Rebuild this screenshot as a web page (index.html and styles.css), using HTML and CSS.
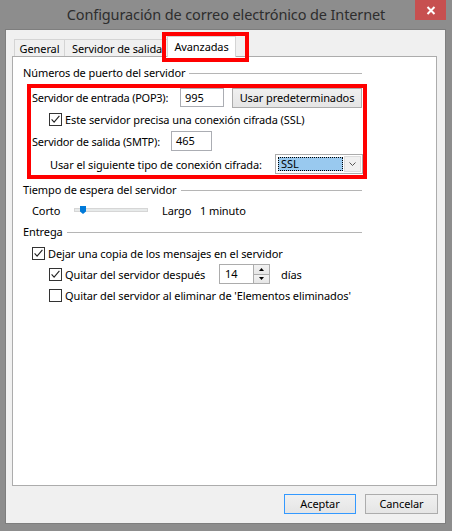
FILE: index.html
```html
<!DOCTYPE html>
<html lang="es">
<head>
<meta charset="utf-8">
<title>Configuración de correo electrónico de Internet</title>
<link rel="stylesheet" href="styles.css">
</head>
<body>
<div class="window">
  <div class="titlebar">
    <div class="title">Configuración de correo electrónico de Internet</div>
    <div class="close">
      <svg width="10" height="9" viewBox="0 0 10 9"><path d="M1.5 1 L8.5 8 M8.5 1 L1.5 8" stroke="#fff" stroke-width="2" fill="none"/></svg>
    </div>
  </div>
  <div class="client">
    <div class="tabs">
      <div class="tab tab-general">General</div>
      <div class="tab tab-out">Servidor de salida</div>
      <div class="tab tab-sel">Avanzadas</div>
      <div class="tab-mark"></div>
    </div>
    <div class="panel">
      <div class="ghead"><span>Números de puerto del servidor</span><i class="rule"></i></div>
      <div class="markbox">
        <div class="row r1">
          <span class="lbl lbl-in">Servidor de entrada (POP3):</span>
          <span class="textbox tb-in">995</span>
          <span class="btn btn-defaults">Usar predeterminados</span>
        </div>
        <div class="row r2">
          <svg class="cb" width="13" height="13" viewBox="0 0 13 13"><rect x="0.5" y="0.5" width="12" height="12" fill="#fff" stroke="#333"/><path d="M2.6 6.4 L5.1 9.2 L10.4 2.8" stroke="#222" stroke-width="1.1" fill="none"/></svg>
          <span class="cbtext">Este servidor precisa una conexión cifrada (SSL)</span>
        </div>
        <div class="row r3">
          <span class="lbl lbl-out">Servidor de salida (SMTP):</span>
          <span class="textbox tb-out">465</span>
        </div>
        <div class="row r4">
          <span class="lbl lbl-enc">Usar el siguiente tipo de conexión cifrada:</span>
          <span class="select">
            <span class="sel-value">SSL</span>
            <span class="sel-drop"><svg width="7" height="4" viewBox="0 0 7 4"><path d="M0.5 0.5 L3.5 3.5 L6.5 0.5" stroke="#555" fill="none"/></svg></span>
          </span>
        </div>
      </div>

      <div class="ghead g2"><span>Tiempo de espera del servidor</span><i class="rule"></i></div>
      <div class="row slider-row">
        <span class="s-short">Corto</span>
        <span class="track"><svg class="thumb" width="6" height="8" viewBox="0 0 6 8"><path d="M0 0 H6 V5.5 L3 8 L0 5.5 Z" fill="#007ad9"/></svg></span>
        <span class="s-long">Largo</span>
        <span>1 minuto</span>
      </div>

      <div class="ghead g3"><span>Entrega</span><i class="rule"></i></div>
      <div class="row e1">
        <svg class="cb" width="13" height="13" viewBox="0 0 13 13"><rect x="0.5" y="0.5" width="12" height="12" fill="#fff" stroke="#333"/><path d="M2.6 6.4 L5.1 9.2 L10.4 2.8" stroke="#222" stroke-width="1.1" fill="none"/></svg>
        <span class="cbtext">Dejar una copia de los mensajes en el servidor</span>
      </div>
      <div class="row e2">
        <svg class="cb" width="13" height="13" viewBox="0 0 13 13"><rect x="0.5" y="0.5" width="12" height="12" fill="#fff" stroke="#333"/><path d="M2.6 6.4 L5.1 9.2 L10.4 2.8" stroke="#222" stroke-width="1.1" fill="none"/></svg>
        <span class="cbtext days-label">Quitar del servidor después</span>
        <span class="spinner">
          <span class="spin-value">14</span>
          <span class="spin-btns">
            <span class="spin-btn"><svg width="5" height="3" viewBox="0 0 5 3"><path d="M0 3 L2.5 0 L5 3 Z" fill="#000"/></svg></span>
            <span class="spin-btn"><svg width="5" height="3" viewBox="0 0 5 3"><path d="M0 0 L2.5 3 L5 0 Z" fill="#000"/></svg></span>
          </span>
        </span>
        <span class="days">días</span>
      </div>
      <div class="row e3">
        <svg class="cb" width="13" height="13" viewBox="0 0 13 13"><rect x="0.5" y="0.5" width="12" height="12" fill="#fff" stroke="#333"/></svg>
        <span class="cbtext">Quitar del servidor al eliminar de 'Elementos eliminados'</span>
      </div>
    </div>
    <div class="actions">
      <span class="btn btn-default">Aceptar</span>
      <span class="btn btn-cancel">Cancelar</span>
    </div>
  </div>
</div>
</body>
</html>
```

FILE: styles.css
```css
* { box-sizing: border-box; }
html, body { margin: 0; padding: 0; }
body {
  width: 452px;
  height: 531px;
  overflow: hidden;
  background: #8d8d8d;
  font-family: "Noto Sans", "Open Sans", sans-serif;
  font-size: 11px;
  letter-spacing: -0.1px;
  color: #000;
}
.window { display: flex; flex-direction: column; height: 531px; }

.titlebar {
  display: grid;
  grid-template-columns: 1fr auto 1fr;
  height: 30px;
}
.title {
  grid-column: 2;
  font-size: 14.5px;
  letter-spacing: -0.12px;
  line-height: 28px;
  color: #2e2e2e;
  white-space: nowrap;
}
.close {
  grid-column: 3;
  justify-self: end;
  margin-right: 6px;
  width: 31px;
  height: 20px;
  background: #c75050;
  display: flex;
  align-items: center;
  justify-content: center;
}

.client {
  margin: 0 7px 0 6px;
  height: 493px;
  background: #f0f0f0;
  padding: 6px 8px 0 6px;
  display: flex;
  flex-direction: column;
  box-shadow: 0 0 0 1px #7e7e7e;
}

.tabs {
  position: relative;
  display: flex;
  align-items: flex-end;
  height: 20px;
  padding-left: 2px;
}
.tab {
  height: 17px;
  border: 1px solid #d4d4d4;
  border-bottom: none;
  background: #f0f0f0;
  text-align: center;
  padding-top: 1px;
  line-height: 15px;
  white-space: nowrap;
  overflow: hidden;
}
.tab-general { width: 51px; }
.tab-out { width: 105px; margin-left: -1px; text-align: left; padding-left: 7px; }
.tab-sel {
  width: 69px;
  height: 21px;
  margin-left: -2px;
  margin-bottom: -1px;
  background: #fff;
  padding-top: 2px;
  position: relative;
  z-index: 1;
}
.tab-mark {
  position: absolute;
  left: 150px;
  top: -4px;
  width: 87px;
  height: 30px;
  border: 4px solid #f00;
  z-index: 2;
}

.panel {
  height: 430px;
  background: #fff;
  border: 1px solid #acacac;
  padding: 8px 0 0 10px;
}

.ghead {
  display: flex;
  align-items: center;
  width: 339px;
  height: 16px;
  line-height: 16px;
  white-space: nowrap;
}
.ghead .rule {
  flex: 1;
  height: 1px;
  background: #b5b5b5;
  margin-left: 4px;
}
.g2 { margin-top: 3px; }
.g3 { margin-top: 5px; }

.markbox {
  margin: 3px 0 0 4px;
  width: 340px;
  height: 95px;
  border: 4px solid #f00;
  padding: 0 0 1px 0;
  display: flex;
  flex-direction: column;
  gap: 3px;
}

.row { display: flex; align-items: center; white-space: nowrap; }
.r1 { height: 19px; }
.r2 { height: 18px; padding-left: 18px; }
.r3 { height: 20px; }
.r4 { height: 20px; }

.lbl { display: block; }
.lbl-in { width: 149px; padding-left: 1px; letter-spacing: -0.25px; }
.lbl-out { width: 140px; padding-left: 1px; letter-spacing: -0.2px; }
.lbl-enc { width: 244px; padding-left: 19px; }

.textbox {
  display: block;
  background: #fff;
  border: 1px solid #abadb3;
  padding-left: 4px;
  line-height: 17px;
}
.tb-in { width: 44px; height: 19px; }
.tb-out { width: 41px; height: 20px; line-height: 18px; }

.btn {
  display: flex;
  align-items: center;
  justify-content: center;
  height: 20px;
  border: 1px solid #acacac;
  background: linear-gradient(#f0f0f0, #e5e5e5);
  line-height: 16px;
}
.btn-defaults { width: 130px; margin-left: 8px; }

.cb { display: block; flex: none; }
.cbtext { margin-left: 3px; }

.select {
  display: flex;
  align-items: center;
  width: 88px;
  height: 20px;
  border: 1px solid #acacac;
  background: #fff;
  padding: 1px;
}
.sel-value {
  display: block;
  width: 66px;
  height: 14px;
  margin-left: 1px;
  background: #99c9ef;
  border: 1px dotted #000;
  line-height: 12px;
  padding-left: 2px;
}
.sel-drop {
  display: flex;
  align-items: center;
  justify-content: center;
  width: 17px;
  height: 16px;
  margin-left: 1px;
  border: 1px solid #dcdcdc;
  background: #f0f0f0;
}

.slider-row { height: 18px; margin-top: 3px; padding-left: 9px; }
.s-short { width: 42px; }
.track {
  position: relative;
  display: block;
  width: 74px;
  height: 4px;
  border: 1px solid #d6d6d6;
  background: #e7eaea;
}
.thumb { position: absolute; left: 5px; top: -3px; }
.s-long { margin-left: 14px; width: 38px; }

.e1 { height: 18px; margin-top: 4px; padding-left: 9px; }
.e2 { height: 20px; margin-top: 2px; padding-left: 26px; }
.e3 { height: 18px; margin-top: 2px; padding-left: 26px; }
.days-label { width: 154px; }

.spinner {
  display: flex;
  width: 51px;
  height: 20px;
  border: 1px solid #acacac;
  background: #fff;
}
.spin-value { flex: 1; padding-left: 5px; line-height: 18px; }
.spin-btns {
  display: flex;
  flex-direction: column;
  width: 16px;
  border-left: 1px solid #acacac;
}
.spin-btn {
  flex: 1;
  display: flex;
  align-items: center;
  justify-content: center;
  background: linear-gradient(#f2f2f2, #e6e6e6);
}
.spin-btn + .spin-btn { border-top: 1px solid #acacac; }
.days { margin-left: 11px; }

.actions {
  display: flex;
  justify-content: flex-end;
  gap: 9px;
  margin-top: 8px;
  margin-right: -1px;
}
.btn-default { width: 72px; border-color: #3399ff; }
.btn-cancel { width: 73px; }
```
